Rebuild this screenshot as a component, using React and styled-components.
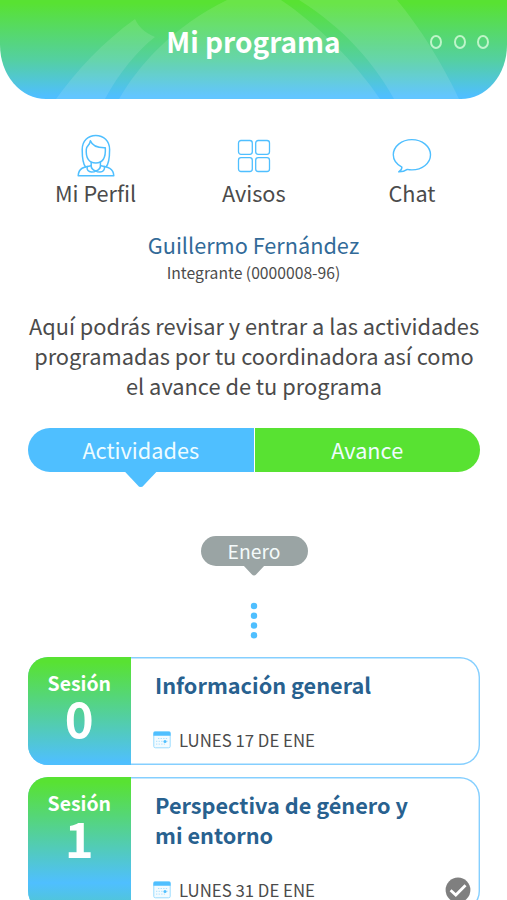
import React from 'react'
import styled, { createGlobalStyle } from 'styled-components'

const green = '#58e232'
const blue = '#4fbfff'

const sessions = [
  { number: 0, title: ['Información general'], date: 'LUNES 17 DE ENE' },
  { number: 1, title: ['Perspectiva de género y', 'mi entorno'], date: 'LUNES 31 DE ENE', done: true },
]

const ProfileIcon = () => (
  <svg width="38" height="44" viewBox="0 0 38 44" fill="none" stroke={blue} strokeWidth="1.5" strokeLinejoin="round" strokeLinecap="round">
    <path d="M8.600 33C5.500 29.500 5.200 24 5.200 15.500C5.200 7 11 1.500 18.800 1.500S32.600 7 32.600 15.500C32.600 24 32.200 29.500 29 33" />
    <path d="M9.300 15.300C8.600 24 12 29 18.800 29S29 24 28.300 13.800C21 14 15.500 12.500 13.400 6.800C13.300 9.500 11.500 11.200 9.800 13.200Z" />
    <path d="M14.200 28.300V31.500C14 34.500 15.800 36 18.800 37C21.800 36 23.600 34.500 23.400 31.500V28.300" />
    <path d="M13.800 31.800C8 32.800 1.500 33.500 1.200 41.800H36.800C36.500 33.500 29.500 32.800 24 31.800" />
    <path d="M10.200 32.600C9.500 36 11.500 38 14.500 38C16.500 38 17.800 37.800 18.800 37C19.800 37.800 21 38 23 38C26 38 28 36 27.400 32.600" />
  </svg>
)

const NoticesIcon = () => (
  <svg width="34" height="34" viewBox="0 0 34 34" fill="none" stroke={blue} strokeWidth="1.300">
    <rect x="1.500" y="1.500" width="13.800" height="13.800" rx="2.500" />
    <rect x="18.700" y="1.500" width="13.800" height="13.800" rx="2.500" />
    <rect x="1.500" y="18.700" width="13.800" height="13.800" rx="2.500" />
    <rect x="18.700" y="18.700" width="13.800" height="13.800" rx="2.500" />
  </svg>
)

const ChatIcon = () => (
  <svg width="40" height="36" viewBox="0 0 40 36" fill="none" stroke={blue} strokeWidth="1.400" strokeLinejoin="round">
    <path d="M9.900 29.200C4.500 26.300 1.300 22 1.300 16.800C1.300 8.500 9.500 1.600 19.900 1.600S38.500 8.500 38.500 16.800S30.300 31.900 19.900 31.900C18.300 31.900 16.800 31.800 15.300 31.400C13.200 32.900 10 34 6.700 33.900C8.800 32.600 9.900 31 9.900 29.200Z" />
  </svg>
)

const CalendarIcon = () => (
  <svg width="18" height="18" viewBox="0 0 18 18" fill="none">
    <rect x=".8" y="1" width="16.400" height="15.800" rx="1.500" fill="#f3fbff" stroke="#9bdcff" />
    <path d="M.4 4.800V2Q.4.600 1.800.6H16.200Q17.600.6 17.600 2V4.800Z" fill={blue} />
    <path d="M5 7.500H15M3 10.300H15M3 13.100H12" stroke="#a9dfff" strokeDasharray="1.300 1.300" />
    <circle cx="12" cy="10.400" r="1.500" fill={blue} />
  </svg>
)

const CheckIcon = () => (
  <svg width="26" height="26" viewBox="0 0 26 26" fill="none">
    <circle cx="13" cy="13" r="12.400" fill="#7f7f7f" />
    <path d="M5.600 13.300L10.800 18.100L20.500 8.200" stroke="#fff" strokeWidth="2.800" />
  </svg>
)

const App = () => {
  return (
    <Screen>
      <GlobalStyle />
      <Header>
        <Ribbons viewBox="0 0 507 99">
          <path d="M56 99C77 70 103 42 135 19C138 26 145 33 155 37C137 51 119 73 105 99Z" />
          <path d="M119 99C139 64 174 26 227 0H281C318 25 354 61 380 99Z" />
          <path d="M299 0H397C421 29 442 63 459 99H394C374 63 345 29 299 0Z" />
        </Ribbons>
        <Title>Mi programa</Title>
        <More>
          <Ring />
          <Ring />
          <Ring />
        </More>
      </Header>
      <Nav>
        <NavItem><IconBox><ProfileIcon /></IconBox>Mi Perfil</NavItem>
        <NavItem><IconBox><NoticesIcon /></IconBox>Avisos</NavItem>
        <NavItem><IconBox><ChatIcon /></IconBox>Chat</NavItem>
      </Nav>
      <Name>Guillermo Fernández</Name>
      <Member>Integrante (0000008-96)</Member>
      <Intro>
        Aquí podrás revisar y entrar a las actividades<br />
        programadas por tu coordinadora así como<br />
        el avance de tu programa
      </Intro>
      <Tabs>
        <Tab $color={blue}>Actividades<Pointer $color={blue} $width={33} $height={15} /></Tab>
        <Tab $color={green}>Avance</Tab>
      </Tabs>
      <Month>Enero<Pointer $color="#9aa4a4" $width={23} $height={10} /></Month>
      <Dots viewBox="0 0 8 38">
        <circle cx="4" cy="4" r="3.200" />
        <circle cx="4" cy="13.800" r="3.200" />
        <circle cx="4" cy="23.500" r="3.200" />
        <circle cx="4" cy="33.300" r="3.200" />
      </Dots>
      <List>
        {sessions.map((s) => (
          <Card key={s.number}>
            <Session>
              <SessionLabel>Sesión</SessionLabel>
              <SessionNumber>{s.number}</SessionNumber>
            </Session>
            <Detail>
              <CardTitle>
                {s.title.map((line) => <div key={line}>{line}</div>)}
              </CardTitle>
              <DateRow>
                <CalendarIcon />
                <DateText>{s.date}</DateText>
                {s.done && <CheckIcon />}
              </DateRow>
            </Detail>
          </Card>
        ))}
      </List>
    </Screen>
  )
}

export default App

const GlobalStyle = createGlobalStyle`
  body {
    margin: 0;
    background: #fff;
    overflow: hidden;
  }
  * {
    box-sizing: border-box;
  }
`
const Screen = styled.div`
  width: 507px;
  height: 900px;
  overflow: hidden;
  display: flex;
  flex-direction: column;
  background: #fff;
  color: #4b4b4b;
  font-family: "Noto Sans CJK SC", "Noto Sans", sans-serif;
  font-size: 21.700px;
  line-height: 30px;
  white-space: nowrap;
`
const Header = styled.header`
  position: relative;
  flex: none;
  display: flex;
  align-items: center;
  justify-content: center;
  height: 99px;
  padding-bottom: 17px;
  overflow: hidden;
  border-radius: 0 0 46px 46px / 0 0 54px 54px;
  background: linear-gradient(${green} 3%, #54d0a0 60%, ${blue} 97%);
`
const Ribbons = styled.svg`
  position: absolute;
  top: 0;
  left: 0;
  width: 507px;
  height: 99px;
  fill: #fff;
  fill-opacity: 0.11;
`
const Title = styled.h1`
  position: relative;
  margin: 0;
  color: #fff;
  font-size: 28px;
  font-weight: 700;
  line-height: 40px;
`
const More = styled.div`
  position: absolute;
  top: 35px;
  right: 18px;
  display: flex;
  gap: 11.500px;
`
const Ring = styled.span`
  width: 12px;
  height: 14px;
  border: 2px solid rgba(225, 255, 225, 0.75);
  border-radius: 50%;
`
const Nav = styled.nav`
  flex: none;
  display: grid;
  grid-template-columns: repeat(3, 1fr);
  padding: 35px 16px 0 16.500px;
`
const NavItem = styled.a`
  display: flex;
  flex-direction: column;
  align-items: center;
`
const IconBox = styled.span`
  display: flex;
  align-items: center;
  justify-content: center;
  height: 44px;
`
const Name = styled.div`
  margin-top: 22px;
  text-align: center;
  color: #326a98;
`
const Member = styled.div`
  margin-top: 1px;
  text-align: center;
  font-size: 15.700px;
  line-height: 24px;
`
const Intro = styled.p`
  margin: 26px 0 0;
  padding-left: 1px;
  text-align: center;
  font-size: 21.800px;
  line-height: 30.200px;
`
const Tabs = styled.div`
  flex: none;
  display: flex;
  gap: 1px;
  height: 44px;
  margin: 26.400px 27px 0 28px;
`
const Tab = styled.div`
  position: relative;
  flex: 1;
  display: flex;
  align-items: center;
  justify-content: center;
  padding-bottom: 1px;
  color: #eefcff;
  background: ${(p) => p.$color};
  &:first-child {
    border-radius: 22px 0 0 22px;
  }
  &:last-child {
    border-radius: 0 22px 22px 0;
  }
`
const Pointer = styled.span`
  position: absolute;
  top: calc(100% - 1px);
  left: 50%;
  width: ${(p) => p.$width}px;
  height: ${(p) => p.$height + 1}px;
  transform: translateX(-50%);
  background: ${(p) => p.$color};
  clip-path: polygon(0 0, 100% 0, 60% 88%, 55% 98%, 50% 100%, 45% 98%, 40% 88%);
`
const Month = styled.div`
  position: relative;
  flex: none;
  align-self: center;
  display: flex;
  align-items: center;
  justify-content: center;
  width: 107px;
  height: 30px;
  margin: 63.500px 0 0 1px;
  border-radius: 15px;
  color: #f4fafa;
  background: #9aa4a4;
  font-size: 19.300px;
`
const Dots = styled.svg`
  flex: none;
  align-self: center;
  width: 8px;
  height: 38px;
  margin: 36px 0 0 1px;
  fill: ${blue};
`
const List = styled.div`
  flex: none;
  display: flex;
  flex-direction: column;
  gap: 12px;
  margin: 17px 27px 0 28px;
`
const Card = styled.article`
  display: flex;
  min-height: 108px;
  overflow: hidden;
  border-radius: 20px;
  background: #fff;
  box-shadow: inset 0 0 0 1.400px #85cfff;
`
const Session = styled.div`
  flex: none;
  width: 102.500px;
  padding-top: 11px;
  text-align: center;
  color: #fff;
  font-weight: 700;
  background: linear-gradient(${green} 5px, ${blue} 106px, ${green} 210px);
`
const SessionLabel = styled.div`
  font-size: 19.400px;
`
const SessionNumber = styled.div`
  font-size: 49px;
  line-height: 38px;
`
const Detail = styled.div`
  flex: 1;
  padding: 13px 9px 8px 24.500px;
`
const CardTitle = styled.h2`
  margin: 0;
  color: #28618f;
  font-size: 21.700px;
  font-weight: 700;
  line-height: 30.300px;
`
const DateRow = styled.div`
  display: flex;
  align-items: center;
  height: 26px;
  margin: 27px 0 0 -2px;
`
const DateText = styled.span`
  flex: 1;
  padding-left: 8px;
  font-size: 16.800px;
  line-height: 26px;
`
